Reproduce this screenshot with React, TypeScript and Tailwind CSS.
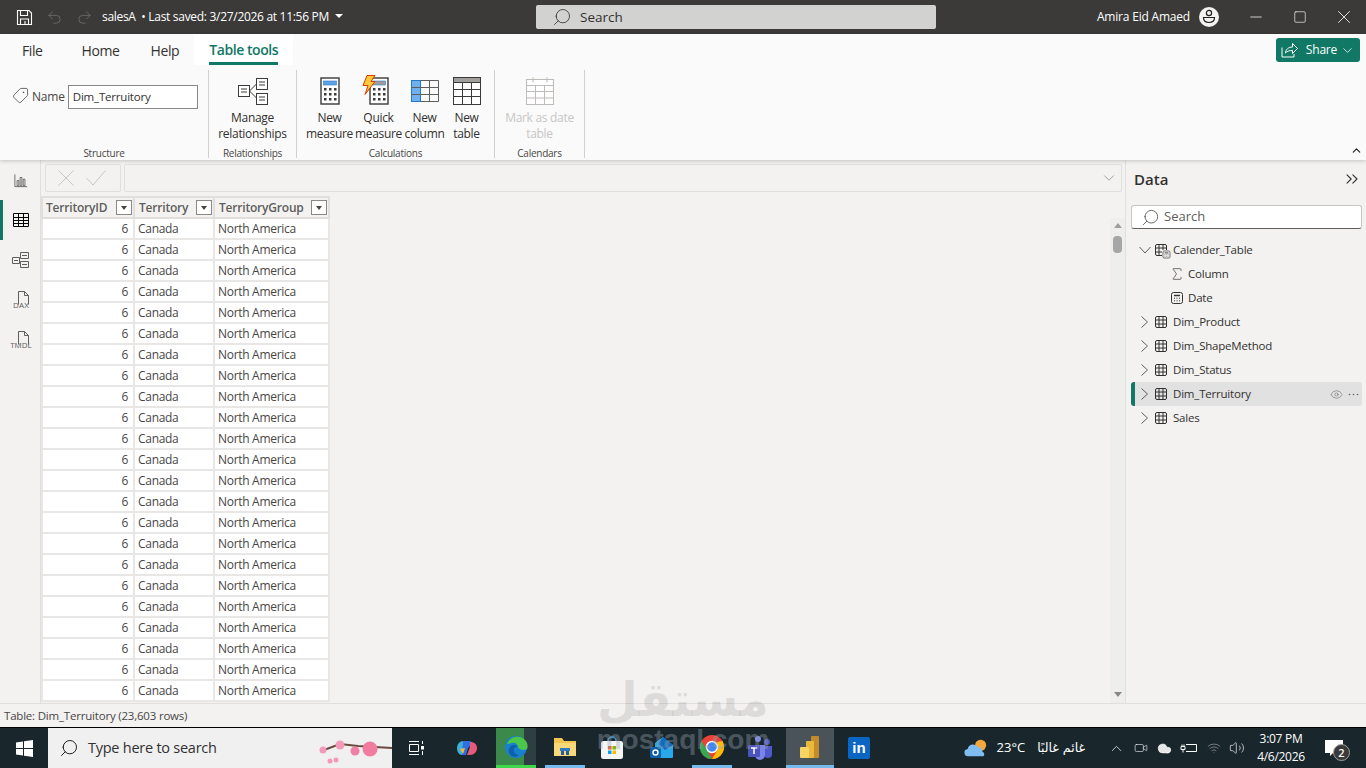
import { ChevronDown, Minus, Square, X, Search, Sigma, Eye, ChevronUp, ChevronsRight, Redo2, Undo2, Wifi, Volume2, Video, Cloud, Tag } from 'lucide-react';

const rows = Array.from({ length: 23 });

const GridIcon = () => (
  <svg width="14" height="14" viewBox="0 0 14 14" fill="none" stroke="#323130" strokeWidth="1">
    <rect x="1.5" y="1.5" width="11" height="11" rx="1.5" />
    <path d="M1.5 5h11M1.5 9h11M5 1.5v11M9 1.5v11" />
  </svg>
);

const CalcIcon = ({ size = 14 }: { size?: number }) => (
  <svg width={size} height={size} viewBox="0 0 14 14" fill="none" stroke="#323130">
    <rect x="1.5" y="1.5" width="11" height="11" rx="2" />
    <path d="M4 4.500h6" strokeWidth="1.4" />
    <path d="M4 7.200h1M6.500 7.200h1M9 7.200h1M4 9.800h1M6.500 9.800h1M9 9.800h1" />
  </svg>
);

const TreeChevron = () => (
  <svg width="9" height="14" viewBox="0 0 9 14" fill="none" stroke="#605e5c" strokeWidth="1">
    <path d="M1.500 1.500l6 5.500-6 5.500" />
  </svg>
);

// big calculator on the ribbon, used by New measure and Quick measure
const MeasureIcon = ({ bar }: { bar: string }) => (
  <svg width="20" height="28" viewBox="0 0 20 28">
    <rect x="1" y="1" width="18" height="26" fill="#fff" stroke="#3b3a39" strokeWidth="1.4" />
    <rect x="3.500" y="4" width="13" height="4" fill={bar} stroke="#2f78c4" strokeWidth="0.6" />
    {[11, 16, 21].map((y) =>
      [4, 9, 14].map((x) => <rect key={`${x}-${y}`} x={x} y={y} width="2.5" height="2.5" fill="#3b3a39" />),
    )}
  </svg>
);

const RibbonButton = ({ icon, lines, width }: { icon: React.ReactNode; lines: string[]; width: string }) => (
  <div className={`flex flex-col items-center ${width}`}>
    <div className="mt-[3px] h-[36px] flex items-center justify-center">{icon}</div>
    <div className="mt-[1px] text-[12px] tracking-[-0.3px] leading-[16px] text-center text-[#323130] whitespace-nowrap">
      {lines.map((l) => (
        <div key={l}>{l}</div>
      ))}
    </div>
  </div>
);

const RibbonGroup = ({ label, width, children }: { label: string; width: string; children: React.ReactNode }) => (
  <div className={`${width} h-[88px] border-r border-[#d2d0ce] flex flex-col`}>
    <div className="flex-1 flex justify-center">{children}</div>
    <div className="text-[10px] tracking-[-0.25px] leading-[12px] mb-[-1px] text-center text-[#484644]">{label}</div>
  </div>
);

const TreeRow = ({ name, selected }: { name: string; selected?: boolean }) => (
  <div className={`h-[24px] flex items-center rounded-[3px] relative ${selected ? 'bg-[#e1e1e1] border-l-4 border-[#117865] pl-[5px]' : 'pl-[9px]'}`}>
    <TreeChevron />
    <div className="ml-[5px]"><GridIcon /></div>
    <span className="ml-[5px] text-[11.500px] tracking-[-0.2px] text-[#323130]">{name}</span>
    {selected && (
      <div className="ml-auto mr-[3px] flex items-center gap-[5px] text-[#605e5c]">
        <Eye size={13} strokeWidth={1} />
        <svg width="11" height="3" viewBox="0 0 11 3" fill="#605e5c">
          <circle cx="1.500" cy="1.500" r="0.8" />
          <circle cx="5.500" cy="1.500" r="0.8" />
          <circle cx="9.500" cy="1.500" r="0.8" />
        </svg>
      </div>
    )}
  </div>
);

export default function App() {
  return (
    <div className="w-[1366px] h-[768px] overflow-hidden relative flex flex-col bg-[#f3f2f1] font-['Open_Sans','Noto_Sans',sans-serif]">
      {/* title bar */}
      <div className="h-[34px] shrink-0 bg-[#3b3a38] flex items-center text-white">
        <div className="w-[536px] flex items-center pl-[16px]">
          <svg width="17" height="17" viewBox="0 0 17 17" fill="none" stroke="#fff" strokeWidth="1.1">
            <path d="M1.500 1.500h11.500l2.500 2.500v11.500h-14z" />
            <path d="M4.500 1.500v5h7v-5M4.500 15.500v-5.500h8v5.500M9 12v3.500" />
          </svg>
          <Undo2 size={17} strokeWidth={1.2} className="ml-[13px] text-[#6f6e6c]" />
          <Redo2 size={17} strokeWidth={1.2} className="ml-[13px] text-[#6f6e6c]" />
          <span className="ml-[9px] text-[12px] tracking-[-0.3px] whitespace-nowrap">salesA&nbsp;&nbsp;•&nbsp;Last saved: 3/27/2026 at 11:56 PM</span>
          <span className="ml-[6px] mb-[3px] w-0 h-0 border-x-[4px] border-x-transparent border-t-[4px] border-t-white" />
        </div>
        <div className="w-[400px] h-[24px] bg-[#d2d2d0] rounded-[2px] flex items-center pl-[16px] text-[#323130]">
          <Search size={20} strokeWidth={1} className="scale-x-[-1]" />
          <span className="ml-[8px] text-[13.500px]">Search</span>
        </div>
        <div className="flex-1 flex items-center justify-end">
          <span className="text-[12px] tracking-[-0.2px]">Amira Eid Amaed</span>
          <span className="ml-[9px] w-[20px] h-[20px] rounded-full bg-[#f3f2f1] flex items-center justify-center">
            <svg width="16" height="16" viewBox="0 0 16 16" fill="none" stroke="#201f1e" strokeWidth="1.2">
              <circle cx="8" cy="4" r="2.600" />
              <path d="M2.500 8.500h11c0 3-2.200 5-5.500 5s-5.500-2-5.500-5z" />
            </svg>
          </span>
          <Minus size={18} strokeWidth={1} className="ml-[28px]" />
          <Square size={14} strokeWidth={1.1} className="ml-[28px]" />
          <X size={22} strokeWidth={0.9} className="ml-[26px] mr-[11px]" />
        </div>
      </div>

      {/* ribbon */}
      <div className="h-[126px] shrink-0 bg-[#fafafa] shadow-[0_1px_4px_rgba(0,0,0,0.2)] z-10 relative">
        <div className="h-[32px] flex items-center text-[14px] tracking-[-0.4px] text-[#323130]">
          <span className="ml-[22px]">File</span>
          <span className="ml-[39px]">Home</span>
          <span className="ml-[31px]">Help</span>
          <div className="ml-[15px] w-[99px] h-[31px] self-start bg-white flex justify-center">
            <span className="h-[31px] leading-[32px] border-b-[3px] border-[#117865] text-[#117865] font-semibold tracking-[-0.45px]">Table tools</span>
          </div>
          <button className="ml-auto mr-[6px] w-[84px] h-[24px] rounded-[3px] bg-[#117865] text-white flex items-center justify-center text-[12px]">
            <svg width="17" height="16" viewBox="0 0 17 16" fill="none" stroke="#fff" strokeWidth="1">
              <path d="M1 5.500v9.500h12v-3" />
              <path d="M4.500 11c0-3.500 3-6 7-6V1.500l5 5-5 5V8.500c-3 0-5.500.5-7 2.500z" />
            </svg>
            <span className="ml-[8px] tracking-[-0.2px]">Share</span>
            <ChevronDown size={15} strokeWidth={1.2} className="ml-[3px]" />
          </button>
        </div>
        <div className="flex pt-[4px]">
          <RibbonGroup label="Structure" width="w-[209px]">
            <div className="flex items-start pt-[15px] w-full pl-[12px]">
              <Tag size={17} strokeWidth={1.1} className="mt-[2px] scale-x-[-1] text-[#484644]" />
              <span className="ml-[3px] mt-[3px] text-[12px] tracking-[-0.2px] text-[#484644]">Name</span>
              <div className="ml-[3px] w-[130px] h-[24px] bg-white border border-[#8a8886] pl-[4px] text-[11.500px] tracking-[-0.2px] leading-[22px] text-[#323130]">Dim_Terruitory</div>
            </div>
          </RibbonGroup>
          <RibbonGroup label="Relationships" width="w-[88px]">
            <RibbonButton
              width="w-[80px]"
              lines={['Manage', 'relationships']}
              icon={
                <svg width="30" height="28" viewBox="0 0 30 28" fill="#fff" stroke="#3b3a39">
                  <path d="M11.500 14l7-7M11.500 14l7 7" fill="none" />
                  <rect x="18.500" y="1.500" width="11" height="11" />
                  <rect x="18.500" y="16.500" width="11" height="11" />
                  <rect x="0.500" y="8.500" width="11" height="11" />
                  <path d="M3 12h6M3 15h6M21 5h6M21 8h6M21 20h6M21 23h6" fill="none" />
                </svg>
              }
            />
          </RibbonGroup>
          <RibbonGroup label="Calculations" width="w-[198px]">
            <div className="flex">
              <RibbonButton width="w-[50px]" lines={['New', 'measure']} icon={<MeasureIcon bar="#5aa2e8" />} />
              <RibbonButton
                width="w-[48px]"
                lines={['Quick', 'measure']}
                icon={
                  <div className="relative">
                    <MeasureIcon bar="#a19f9d" />
                    <svg className="absolute -left-[7px] -top-[2px]" width="14" height="20" viewBox="0 0 14 20">
                      <path d="M5 .5h8l-4 6h4L3 19.500l3-9H1z" fill="#ffc83d" stroke="#d83b01" />
                    </svg>
                  </div>
                }
              />
              <RibbonButton
                width="w-[44px]"
                lines={['New', 'column']}
                icon={
                  <svg width="28" height="22" viewBox="0 0 28 22" fill="#fff" stroke="#605e5c">
                    <rect x="0.500" y="0.500" width="9" height="21" fill="#6fb0ee" stroke="#2479cf" />
                    <path d="M9.500.5h18v21h-18M18.500.5v21M9.500 7.500h18M9.500 14.500h18M.5 7.500h9M.5 14.500h9" fill="none" />
                  </svg>
                }
              />
              <RibbonButton
                width="w-[40px]"
                lines={['New', 'table']}
                icon={
                  <svg width="28" height="28" viewBox="0 0 28 28" fill="#fff" stroke="#3b3a39">
                    <rect x="0.500" y="0.500" width="27" height="27" />
                    <rect x="0.500" y="0.500" width="27" height="5" fill="#a19f9d" />
                    <path d="M.5 12.500h27M.5 19.500h27M9.500 5.500v22M18.500 5.500v22" fill="none" />
                  </svg>
                }
              />
            </div>
          </RibbonGroup>
          <RibbonGroup label="Calendars" width="w-[90px]">
            <div className="flex flex-col items-center">
              <div className="mt-[3px] h-[36px] flex items-center justify-center">
                <svg width="28" height="28" viewBox="0 0 28 28" fill="#fff" stroke="#bebbb8">
                  <rect x="0.500" y="2.500" width="27" height="25" />
                  <path d="M.5 8.500h27M.5 14.500h27M.5 21h27M9.500 8.500v19M18.500 8.500v19M7 .5v5M21 .5v5" fill="none" />
                </svg>
              </div>
              <div className="mt-[1px] text-[12px] tracking-[-0.3px] leading-[16px] text-center text-[#c8c6c4] whitespace-nowrap">
                <div>Mark as date</div>
                <div>table</div>
              </div>
            </div>
          </RibbonGroup>
        </div>
        <ChevronUp size={13} strokeWidth={2.2} className="absolute right-[3px] bottom-[3px] text-[#201f1e]" />
      </div>

      {/* main */}
      <div className="flex-1 min-h-0 flex">
        <div className="w-[41px] shrink-0 border-r border-[#e1dfdd] flex flex-col text-[#605e5c]">
          <div className="h-[40px] pl-[2px] flex items-center justify-center">
            <svg width="14" height="15" viewBox="0 0 16 16" fill="none" stroke="#605e5c">
              <path d="M1 1v14h14" />
              <path d="M3.500 8h2v6h-2zM7 4.500h2v9.500h-2zM10.500 6.500h2v7.500h-2z" />
            </svg>
          </div>
          <div className="h-[40px] flex items-center justify-center border-l-[3px] border-[#117865] pr-[1px]">
            <svg width="16" height="16" viewBox="0 0 16 16" fill="none" stroke="#000">
              <path d="M.5 1.500h15v13h-15zM.5 5.500h15M.5 8.500h15M.5 11.500h15M5.500 1.500v13M10.500 1.500v13" />
            </svg>
          </div>
          <div className="h-[40px] pl-[2px] flex items-center justify-center">
            <svg width="18" height="18" viewBox="0 0 18 18" fill="none" stroke="#605e5c">
              <path d="M8.500 1.500h8v6h-8zM.5 6.500h7v6h-7zM8.500 10.500h8v6h-8zM10 4.500h5M2 9.500h4M10 13.500h5" />
            </svg>
          </div>
          <div className="h-[40px] pl-[2px] flex flex-col items-center justify-center">
            <svg className="ml-[3px]" width="14" height="14" viewBox="0 0 14 14" fill="none" stroke="#605e5c">
              <path d="M2.500 13.500v-13h6l4 4v9M8.500.5v4h4" />
            </svg>
            <span className="-mt-[4px] text-[8px] leading-[8px] tracking-[0.2px] text-[#605e5c]">DAX</span>
          </div>
          <div className="h-[40px] pl-[2px] flex flex-col items-center justify-center">
            <svg className="ml-[3px]" width="14" height="14" viewBox="0 0 14 14" fill="none" stroke="#605e5c">
              <path d="M2.500 13.500v-13h6l4 4v9M8.500.5v4h4" />
            </svg>
            <span className="-mt-[4px] text-[8px] leading-[8px] text-[#605e5c]">TMDL</span>
          </div>
        </div>

        <div className="flex-1 min-w-0 flex flex-col">
          <div className="h-[36px] shrink-0 flex pt-[4px] pl-[4px] pr-[3px] gap-[3px]">
            <div className="w-[76px] h-[28px] border border-[#e1dfdd] rounded-[2px] flex items-center pl-[12px] gap-[12px]">
              <svg width="16" height="16" viewBox="0 0 16 16" fill="none" stroke="#c8c6c4">
                <path d="M.5.5l15 15M15.500.5l-15 15" />
              </svg>
              <svg width="20" height="16" viewBox="0 0 20 16" fill="none" stroke="#c8c6c4">
                <path d="M.5 8l6.500 7L19.500.5" />
              </svg>
            </div>
            <div className="flex-1 h-[28px] border border-[#e1dfdd] rounded-[2px] flex items-center justify-end pr-[3px]">
              <ChevronDown size={18} strokeWidth={1} className="text-[#8a8886]" />
            </div>
          </div>
          <div className="flex-1 min-h-0 flex overflow-hidden">
            <div className="flex-1 min-w-0 overflow-hidden">
              <table className="border-collapse table-fixed w-[288px] text-[12px] tracking-[-0.3px] text-[#484644]">
                <thead>
                  <tr className="h-[21px] bg-[#f3f2f1] text-[#605e5c]">
                    {[['TerritoryID', 'w-[92px]', 'pl-[3px]'], ['Territory', 'w-[80px]', 'pl-[4px]'], ['TerritoryGroup', 'w-[115px]', 'pl-[4px]']].map(([h, w, pl]) => (
                      <th key={h} className={`${w} border-2 border-[#e1dfdd] font-semibold text-left p-0`}>
                        <div className={`flex items-center ${pl} pr-[1px]`}>
                          <span className="flex-1 tracking-[-0.2px]">{h}</span>
                          <span className="w-[16px] h-[15px] bg-white border border-[#8a8886] flex items-center justify-center">
                            <span className="w-0 h-0 border-x-[3.500px] border-x-transparent border-t-[4px] border-t-[#484644]" />
                          </span>
                        </div>
                      </th>
                    ))}
                  </tr>
                </thead>
                <tbody>
                  {rows.map((_, i) => (
                    <tr key={i} className="h-[21px] bg-white">
                      <td className="border-2 border-[#e8e7e6] text-right pr-[5px] p-0">6</td>
                      <td className="border-2 border-[#e8e7e6] pl-[3px] p-0">Canada</td>
                      <td className="border-2 border-[#e8e7e6] pl-[3px] p-0">North America</td>
                    </tr>
                  ))}
                </tbody>
              </table>
            </div>
            <div className="w-[15px] shrink-0 mt-[22px] flex flex-col items-center bg-[#eeeeed]">
              <span className="mt-[5px] w-0 h-0 border-x-[4.500px] border-x-transparent border-b-[5px] border-b-[#a19f9d]" />
              <span className="mt-[8px] w-[9px] h-[17px] rounded-[4px] bg-[#a6a6a6]" />
              <span className="mt-auto mb-[6px] w-0 h-0 border-x-[4.500px] border-x-transparent border-t-[5px] border-t-[#8a8886]" />
            </div>
          </div>
        </div>

        <div className="w-[241px] shrink-0 border-l border-[#e1dfdd] pl-[5px] pr-[4px]">
          <div className="h-[38px] flex items-center justify-between pl-[3px]">
            <span className="text-[15px] leading-[28px] font-semibold text-[#323130]">Data</span>
            <ChevronsRight size={20} strokeWidth={1.3} className="text-[#323130]" />
          </div>
          <div className="mt-[7px] h-[24px] bg-white border border-[#c8c6c4] border-b-[#605e5c] rounded-[3px] flex items-center pl-[9px]">
            <Search size={19} strokeWidth={1} className="scale-x-[-1] text-[#484644]" />
            <span className="ml-[4px] text-[13px] text-[#605e5c]">Search</span>
          </div>
          <div className="mt-[9px]">
            <div className="h-[24px] flex items-center pl-[8px]">
              <svg width="12" height="8" viewBox="0 0 12 8" fill="none" stroke="#605e5c">
                <path d="M.5 1l5.500 6 5.500-6" />
              </svg>
              <div className="ml-[3px] relative">
                <GridIcon />
                <span className="absolute -right-[3px] -bottom-[2px] bg-[#f3f2f1]"><CalcIcon size={9} /></span>
              </div>
              <span className="ml-[5px] text-[11.500px] tracking-[-0.2px] text-[#323130]">Calender_Table</span>
            </div>
            <div className="h-[24px] flex items-center pl-[38px]">
              <Sigma size={16} strokeWidth={1} className="text-[#323130]" />
              <span className="ml-[3px] text-[11.500px] tracking-[-0.2px] text-[#323130]">Column</span>
            </div>
            <div className="h-[24px] flex items-center pl-[39px]">
              <CalcIcon />
              <span className="ml-[4px] text-[11.500px] tracking-[-0.2px] text-[#323130]">Date</span>
            </div>
            <TreeRow name="Dim_Product" />
            <TreeRow name="Dim_ShapeMethod" />
            <TreeRow name="Dim_Status" />
            <TreeRow name="Dim_Terruitory" selected />
            <TreeRow name="Sales" />
          </div>
        </div>
      </div>

      {/* status bar */}
      <div className="h-[24px] shrink-0 border-t border-[#e1dfdd] pl-[4px] flex items-center text-[11.500px] tracking-[-0.2px] text-[#484644]">
        Table: Dim_Terruitory (23,603 rows)
      </div>

      {/* taskbar */}
      <div className="h-[41px] shrink-0 bg-[#19272d] border-t border-black flex items-center text-white">
        <div className="w-[48px] flex justify-center">
          <svg width="17" height="17" viewBox="0 0 17 17" fill="#fff">
            <path d="M0 2.500l7-1v6.500h-7zM8 1.300l9-1.300v8h-9zM0 9h7v6.500l-7-1zM8 9h9v8l-9-1.300z" />
          </svg>
        </div>
        <div className="w-[344px] h-full bg-[#f0f0f0] flex items-center pl-[11px] relative">
          <Search size={20} strokeWidth={1.2} className="scale-x-[-1] text-[#201f1e]" />
          <span className="ml-[9px] text-[14.500px] tracking-[-0.25px] text-[#323130]">Type here to search</span>
          <svg className="absolute right-0 top-[8px]" width="74" height="32" viewBox="0 0 74 32">
            <path d="M6 14l16-6 18 2 34 2" fill="none" stroke="#6b4a3f" strokeWidth="2" />
            <circle cx="5" cy="14" r="3.500" fill="#f29ab8" />
            <circle cx="22" cy="9" r="4.500" fill="#f29ab8" />
            <circle cx="37" cy="15" r="4.500" fill="#ef7fa4" />
            <circle cx="52" cy="13" r="7.500" fill="#f27ba0" />
            <circle cx="12" cy="25" r="2.500" fill="#f29ab8" />
            <circle cx="18" cy="24" r="2.500" fill="#f29ab8" />
          </svg>
        </div>
        <div className="w-[48px] flex justify-center">
          <svg width="16" height="16" viewBox="0 0 16 16" fill="none" stroke="#fff">
            <path d="M1 1.500h10M1 14.500h10M1.500 4.500h9v7h-9zM14.500 1v3M14.500 11v4" />
            <rect x="13" y="6" width="3" height="3.500" fill="#fff" stroke="none" />
          </svg>
        </div>
        {/* app icons */}
        <div className="w-[56px] pr-[2px] flex justify-center">
          <svg width="22" height="22" viewBox="0 0 22 22">
            <path d="M1 11c0-4 3-7 6-7l3 7-4 7c-3 0-5-3-5-7z" fill="#3fb0d8" />
            <path d="M7 4h7l3 2-5 5-2 7H6z" fill="#2f6fe0" />
            <path d="M14 5c4 0 7 2 7 6s-3 7-7 7h-3l3-8z" fill="#e85a7a" />
            <path d="M4 12l5-1-2 6z" fill="#f5b942" />
          </svg>
        </div>
        <div className="w-[40px] h-full bg-[linear-gradient(90deg,#3c8a4b_70%,#2e3e42_70%)] flex items-center justify-center border-b-[3px] border-[#3fd84a]">
          <svg width="24" height="24" viewBox="0 0 24 24">
            <circle cx="12" cy="12" r="11" fill="#1780cf" />
            <path d="M3 9C5 2 15-1 21 5c3 3 3 7 2 9-3 2-8 1-9-2 0-3-3-5-6-4-2 .5-4 1-5 1z" fill="#4cc74c" />
            <path d="M14 12c-3-1-5 2-4 5 1 2 3 3 5 3-3 3-8 2-10-2-1-4 1-8 5-8 2 0 3 1 4 2z" fill="#0f5fa8" />
          </svg>
        </div>
        <div className="w-[9px]" />
        <div className="w-[40px] h-full flex items-center justify-center border-b-[3px] border-[#76b9ed]">
          <svg width="22" height="20" viewBox="0 0 22 20">
            <path d="M0 1h8l2 3h12v15H0z" fill="#f3c64f" />
            <path d="M0 6h22v13H0z" fill="#f9d87a" />
            <path d="M6 11h10v3H6z" fill="#2f7bc4" />
            <path d="M7 14h3v4H7zM12 14h3v4h-3z" fill="#1f5f9e" />
          </svg>
        </div>
        <div className="w-[7px]" />
        <div className="w-[40px] flex justify-center">
          <svg width="24" height="24" viewBox="0 0 24 24">
            <path d="M8 5a4 4 0 0 1 8 0" fill="none" stroke="#3a96dd" strokeWidth="1.400" />
            <rect x="1" y="5" width="22" height="18" rx="2.500" fill="#f5f5f5" />
            <rect x="8" y="10" width="3.500" height="3.500" fill="#f25022" />
            <rect x="12.500" y="10" width="3.500" height="3.500" fill="#7fba00" />
            <rect x="8" y="14.500" width="3.500" height="3.500" fill="#00a4ef" />
            <rect x="12.500" y="14.500" width="3.500" height="3.500" fill="#ffb900" />
          </svg>
        </div>
        <div className="w-[10px]" />
        <div className="w-[40px] flex justify-center">
          <svg width="24" height="24" viewBox="0 0 24 24">
            <path d="M5 7l8-6 10 8v12a1 1 0 0 1-1 1H5z" fill="#28a8ea" />
            <path d="M13 1l10 8-8 5-7-6z" fill="#0f6cbd" />
            <rect x="0" y="11" width="11" height="11" rx="1.500" fill="#0f5fa8" />
            <circle cx="5.500" cy="16.500" r="2.500" fill="none" stroke="#fff" strokeWidth="1.400" />
          </svg>
        </div>
        <div className="w-[10px]" />
        <div className="w-[40px] h-full flex items-center justify-center border-b-[3px] border-[#76b9ed]">
          <svg width="24" height="24" viewBox="0 0 24 24">
            <circle cx="12" cy="12" r="12" fill="#ea4335" />
            <path d="M12 24a12 12 0 0 1-10.400-18L7 15l5 9z" fill="#34a853" />
            <path d="M22.400 6A12 12 0 0 1 12 24l5.500-9-.5-8z" fill="#fbbc05" />
            <circle cx="12" cy="12" r="5.500" fill="#4285f4" stroke="#fff" strokeWidth="1.500" />
          </svg>
        </div>
        <div className="w-[8px]" />
        <div className="w-[40px] flex justify-center">
          <svg width="24" height="24" viewBox="0 0 24 24">
            <circle cx="10" cy="3" r="3" fill="#7b83eb" />
            <circle cx="19" cy="6" r="3" fill="#5059c9" />
            <path d="M16 10h8v8a4 4 0 0 1-8 0z" fill="#5059c9" />
            <path d="M5 9h12v10a5 5 0 0 1-10 0z" fill="#7b83eb" />
            <rect x="0" y="9" width="12" height="12" rx="1.500" fill="#4b53bc" />
            <path d="M3 12h6M6 12v6" stroke="#fff" strokeWidth="1.500" />
          </svg>
        </div>
        <div className="w-[6px]" />
        <div className="w-[48px] h-full bg-[#4a5358] flex items-center justify-center border-b-[3px] border-[#76b9ed]">
          <svg width="20" height="22" viewBox="0 0 20 22">
            <rect x="11" y="0" width="8" height="22" rx="1" fill="#c68a2e" />
            <rect x="6" y="5" width="8" height="17" rx="1" fill="#e8b93a" />
            <rect x="0" y="11" width="9" height="11" rx="1" fill="#f6d565" />
          </svg>
        </div>
        <div className="w-[5px]" />
        <div className="w-[40px] flex justify-center">
          <div className="w-[22px] h-[22px] rounded-[2px] bg-[#0a66c2] text-white text-[15px] leading-[22px] font-bold text-center font-['Liberation_Sans',sans-serif]">in</div>
        </div>
        {/* tray */}
        <div className="ml-auto flex items-center text-white">
          <svg width="24" height="22" viewBox="0 0 26 22">
            <circle cx="18" cy="8" r="6" fill="#f4a73a" />
            <path d="M5 20a4 4 0 0 1-1-8 6 6 0 0 1 11-2 5 5 0 0 1 5 5 3 3 0 0 1 1 5z" fill="#7fbdf0" />
          </svg>
          <span className="ml-[9px] text-[13px]">23°C</span>
          <span dir="rtl" className="ml-[12px] text-[12.500px] font-['DejaVu_Sans',sans-serif]">غائم غالبًا</span>
          <ChevronUp size={17} strokeWidth={1} className="ml-[23px]" />
          <Video size={14} strokeWidth={1} className="ml-[9px]" />
          <Cloud size={15} fill="#e6e6e6" strokeWidth={1} className="ml-[9px]" />
          <svg className="ml-[8px]" width="18" height="14" viewBox="0 0 18 14" fill="none" stroke="#fff">
            <path d="M6 3.500h10.500v7H6M1 5.500h4v3H1zM2 5.500v-2M4 5.500v-2M3 8.500v3" />
          </svg>
          <Wifi size={14} strokeWidth={1} className="ml-[9px] text-[#b3b3b3]" />
          <Volume2 size={16} strokeWidth={1} className="ml-[8px]" />
          <div className="ml-[6px] w-[60px] text-center text-[12px] tracking-[-0.3px] leading-[18px]">
            <div>3:07 PM</div>
            <div>4/6/2026</div>
          </div>
          <div className="ml-[14px] mr-[23px] relative">
            <svg width="18" height="18" viewBox="0 0 18 18" fill="#fff">
              <path d="M0 1h18v13H8l-3 3v-3H0z" />
            </svg>
            <span className="absolute -right-[7px] -bottom-[4px] w-[17px] h-[17px] rounded-full bg-[#3b3a39] border border-[#a19f9d] text-[11px] font-semibold leading-[15px] text-center">2</span>
          </div>
        </div>
      </div>

      {/* mostaql watermark */}
      <div className="absolute left-[600px] top-[672px] w-[166px] flex flex-col items-center pointer-events-none">
        <span dir="rtl" className="h-[55px] text-[47px] leading-[55px] font-bold text-black/10 font-['DejaVu_Sans',sans-serif]">مستقل</span>
        <span className="h-[25px] text-[28px] leading-[25px] font-bold text-gray-400/40 font-['Liberation_Sans',sans-serif]">mostaql.com</span>
      </div>
    </div>
  );
}
